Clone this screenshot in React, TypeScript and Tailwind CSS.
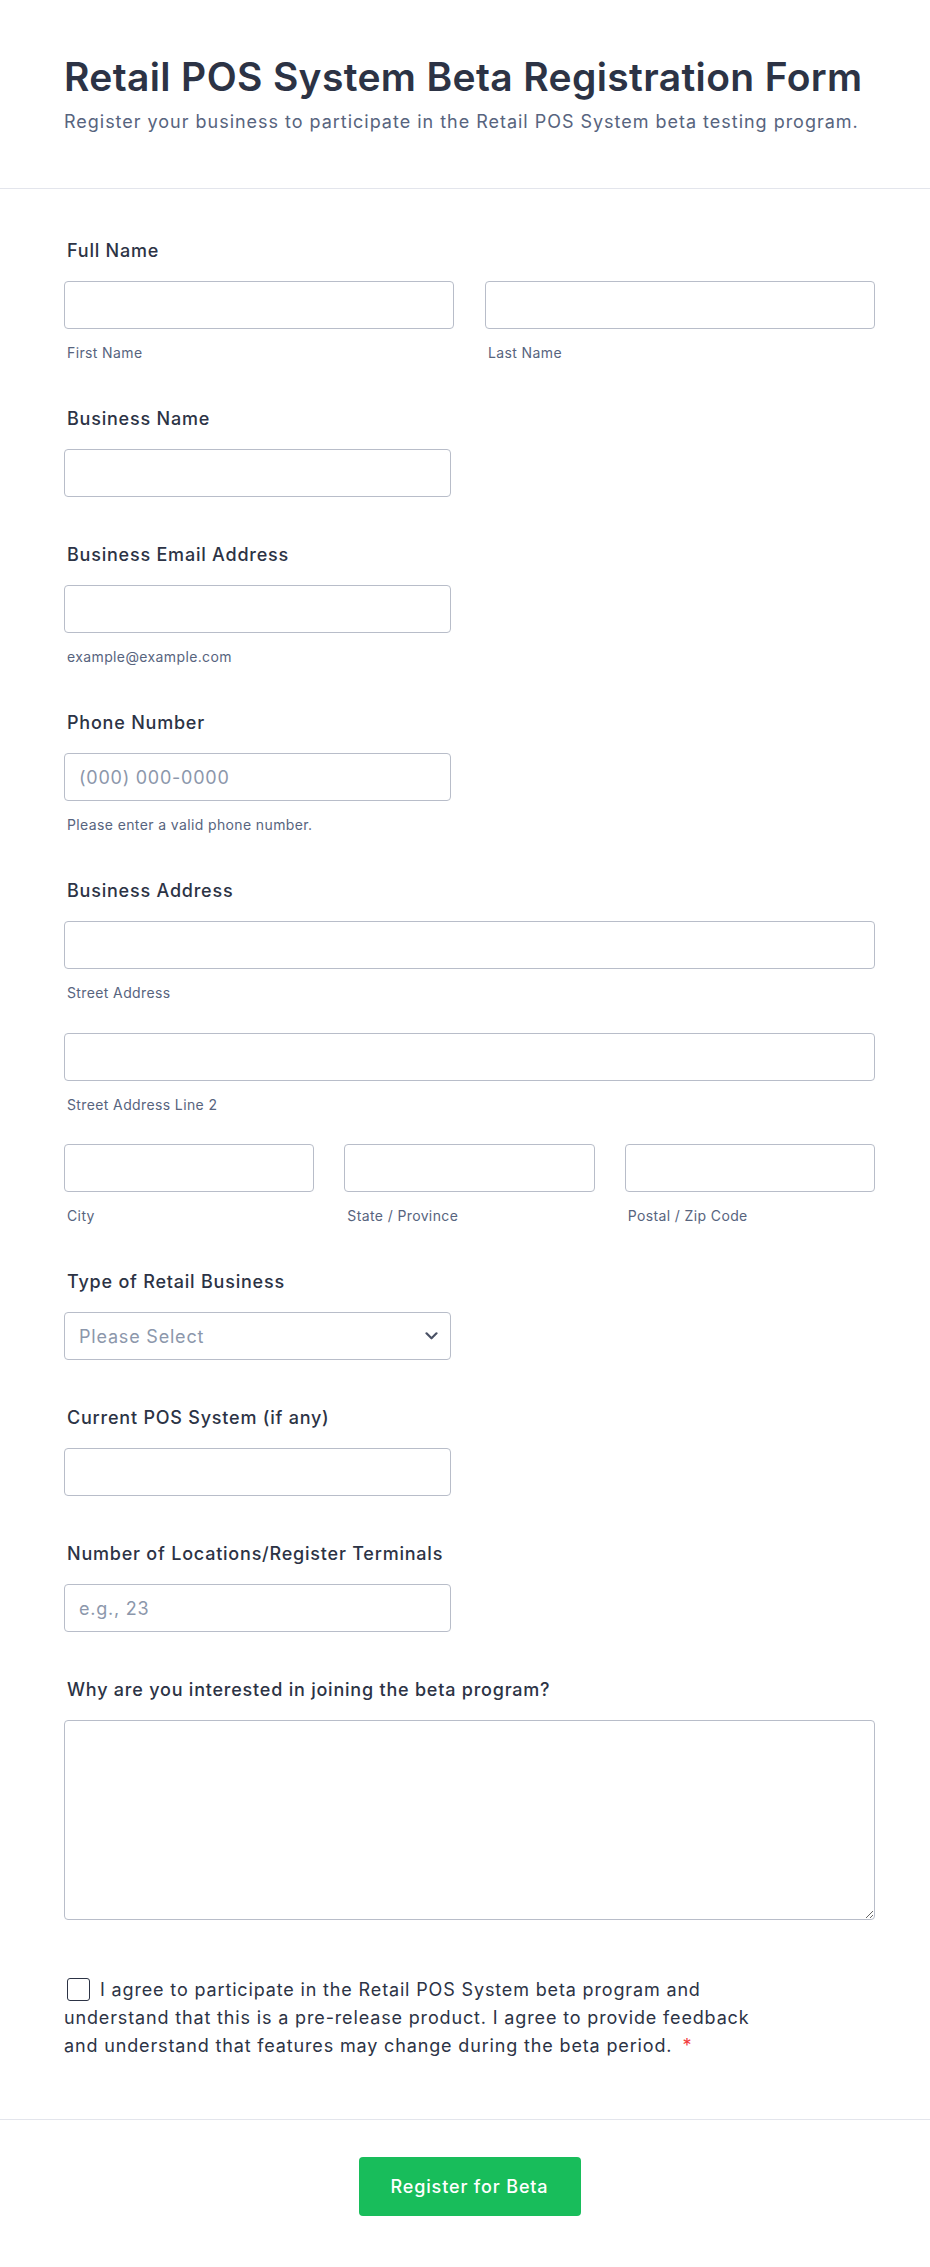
import React from "react";

const labelCls = "block pl-[3px] text-[18px] leading-[27px] font-medium tracking-[0.78px] text-[#2c3345] mb-[17px]";
const inputCls =
  "block h-[48px] w-full rounded-[4px] border border-[#b8bdc9] bg-white px-[14px] text-[18px] tracking-[0.75px] text-[#2c3345] outline-none placeholder:text-[#8c97ab]";
const subCls = "mt-[15px] pl-[3px] text-[14px] leading-[18px] tracking-[0.38px] text-[#57647e]";

function Sub({ children }: { children: React.ReactNode }) {
  return <div className={subCls}>{children}</div>;
}

export default function App() {
  return (
    <div className="min-h-[2267px] bg-white font-['Inter','Noto_Sans',sans-serif] text-[#2c3345]">
      <header className="border-b border-[#e3e5ec] pl-[64px] pr-[55px] pt-[53px] pb-[53px]">
        <h1 className="text-[39px] leading-[48px] font-semibold tracking-[0.36px] text-[#2c3345]">
          Retail POS System Beta Registration Form
        </h1>
        <p className="mt-[7px] text-[18px] leading-[27px] tracking-[0.98px] text-[#57647e]">
          Register your business to participate in the Retail POS System beta testing program.
        </p>
      </header>

      <main className="pl-[64px] pr-[55px] pt-[48px] pb-[59px]">
        <div className="flex flex-col gap-[43px]">
          {/* Full Name */}
          <div>
            <label className={labelCls}>Full Name</label>
            <div className="grid grid-cols-2 gap-[31px]">
              <div>
                <input className={inputCls} />
                <Sub>First Name</Sub>
              </div>
              <div>
                <input className={inputCls} />
                <Sub>Last Name</Sub>
              </div>
            </div>
          </div>

          {/* Business Name */}
          <div className="pb-[1px]">
            <label className={labelCls}>Business Name</label>
            <div className="w-[387px]">
              <input className={inputCls} />
            </div>
          </div>

          {/* Email */}
          <div>
            <label className={labelCls}>Business Email Address</label>
            <div className="w-[387px]">
              <input className={inputCls} />
              <Sub>example@example.com</Sub>
            </div>
          </div>

          {/* Phone */}
          <div>
            <label className={labelCls}>Phone Number</label>
            <div className="w-[387px]">
              <input className={inputCls} placeholder="(000) 000-0000" />
              <Sub>Please enter a valid phone number.</Sub>
            </div>
          </div>

          {/* Address */}
          <div>
            <label className={labelCls}>Business Address</label>
            <div>
              <input className={inputCls} />
              <Sub>Street Address</Sub>
            </div>
            <div className="mt-[31px]">
              <input className={inputCls} />
              <Sub>Street Address Line 2</Sub>
            </div>
            <div className="mt-[30px] grid grid-cols-3 gap-[30px]">
              <div>
                <input className={inputCls} />
                <Sub>City</Sub>
              </div>
              <div>
                <input className={inputCls} />
                <Sub>State / Province</Sub>
              </div>
              <div>
                <input className={inputCls} />
                <Sub>Postal / Zip Code</Sub>
              </div>
            </div>
          </div>

          {/* Type of Retail Business */}
          <div className="pb-[1px]">
            <label className={labelCls}>Type of Retail Business</label>
            <div className="relative flex h-[48px] w-[387px] items-center rounded-[4px] border border-[#b8bdc9] bg-white px-[14px]">
              <span className="text-[18px] tracking-[0.8px] text-[#8c97ab]">Please Select</span>
              <svg
                className="absolute right-[12px] top-1/2 -translate-y-1/2"
                width="13"
                height="9"
                viewBox="0 0 13 9"
                fill="none"
              >
                <path d="M1.5 1.8 L6.5 6.8 L11.5 1.8" stroke="#4b5266" strokeWidth="2.2" strokeLinecap="round" strokeLinejoin="round" />
              </svg>
            </div>
          </div>

          {/* Current POS */}
          <div className="pb-[1px]">
            <label className={labelCls}>Current POS System (if any)</label>
            <div className="w-[387px]">
              <input className={inputCls} />
            </div>
          </div>

          {/* Number of Locations */}
          <div className="pb-[1px]">
            <label className={labelCls}>Number of Locations/Register Terminals</label>
            <div className="w-[387px]">
              <input className={inputCls} placeholder="e.g., 23" />
            </div>
          </div>

          {/* Why */}
          <div>
            <label className={labelCls}>Why are you interested in joining the beta program?</label>
            <textarea className="block h-[200px] w-full rounded-[4px] border border-[#b8bdc9] bg-white px-[14px] py-[10px] text-[18px] outline-none" />
          </div>
        </div>

        <p className="mt-[56px] w-[700px] text-[18px] leading-[28px] tracking-[0.85px] text-[#2c3345]">
          <span className="mr-[10px] ml-[3px] inline-block h-[23px] w-[23px] rounded-[3px] border-[1.5px] border-[#2c3345] bg-white align-[-5px]" />
          I agree to participate in the Retail POS System beta program and understand that this is a pre-release
          product. I agree to provide feedback and understand that features may change during the beta period.
          <span className="ml-[10px] text-[#f23a3c]">*</span>
        </p>
      </main>

      <footer className="border-t border-[#e3e5ec] pl-[64px] pr-[55px] pt-[37px] pb-[50px]">
        <div className="flex justify-center">
          <button className="h-[59px] w-[222px] rounded-[4px] bg-[#18bd5b] text-[18px] font-medium tracking-[0.85px] text-white">
            Register for Beta
          </button>
        </div>
      </footer>
    </div>
  );
}
